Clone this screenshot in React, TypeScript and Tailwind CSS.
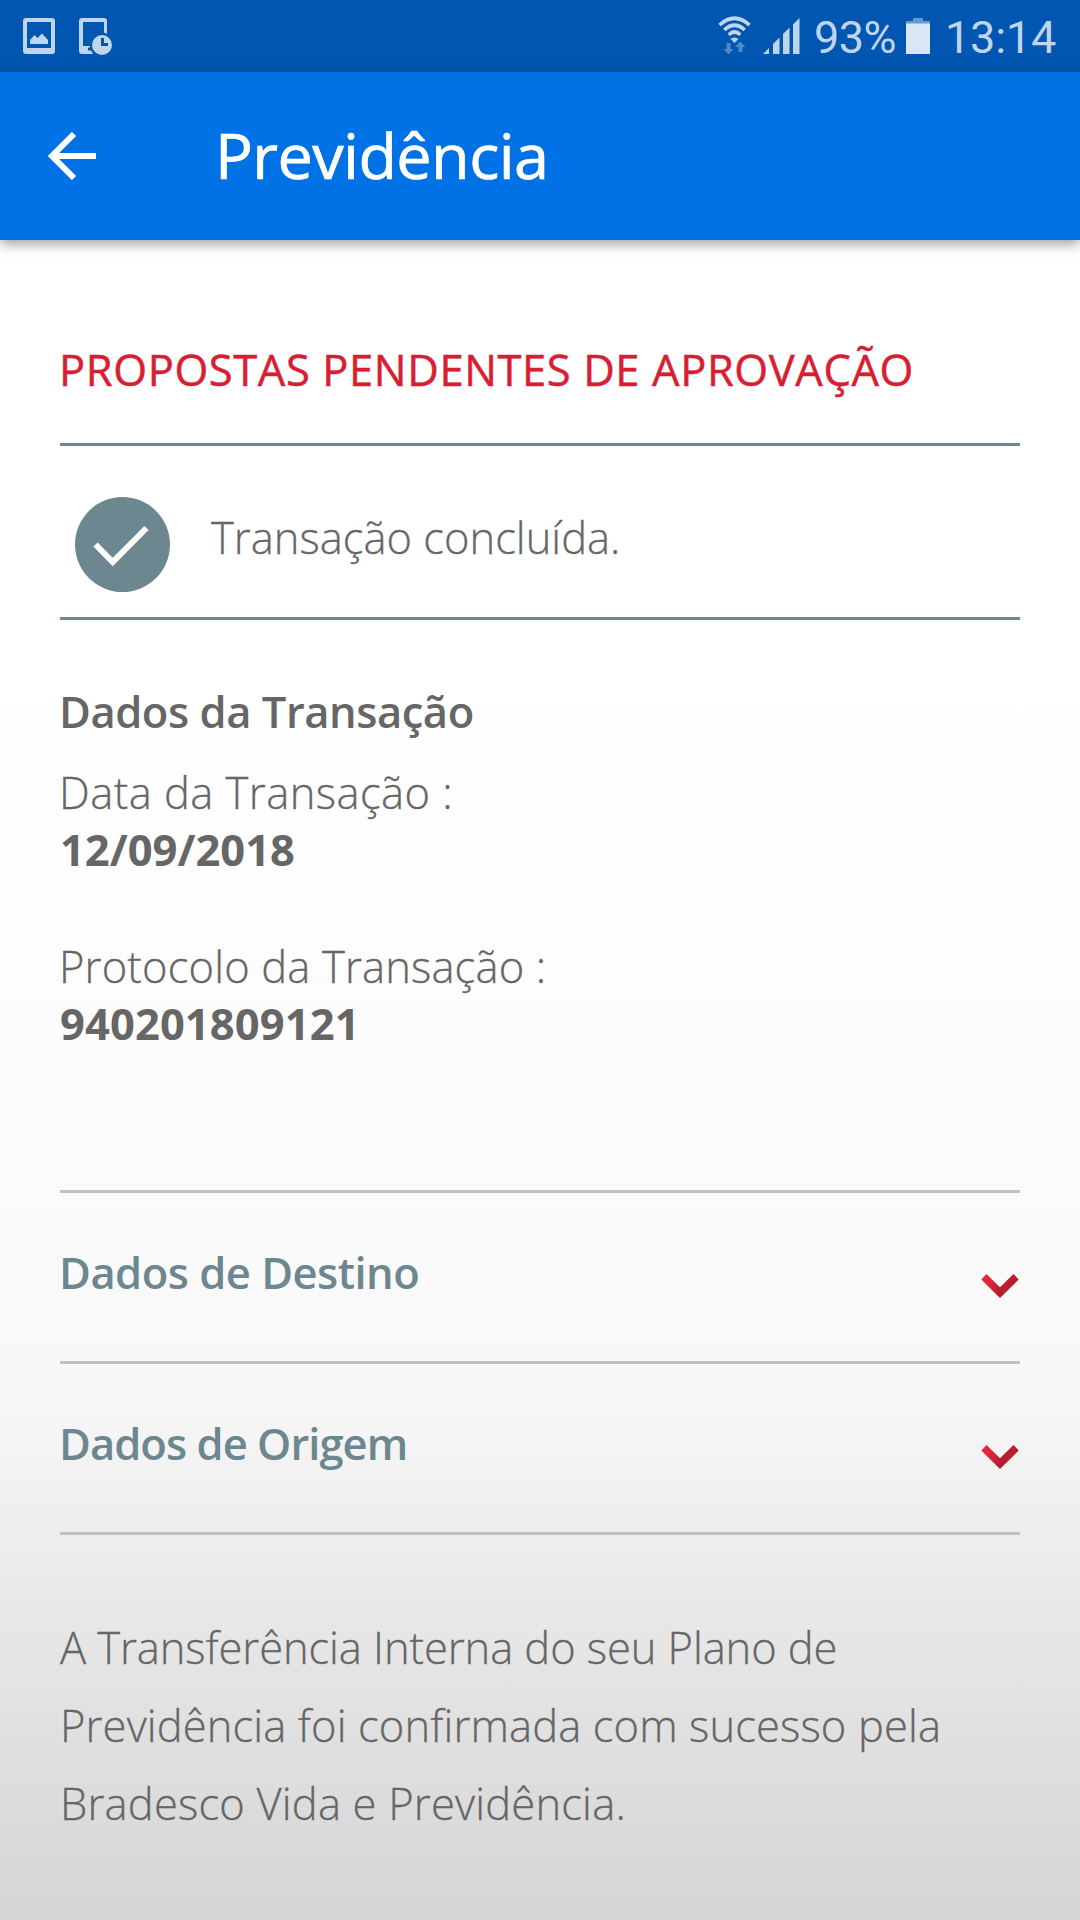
import type { ReactNode } from "react";

function StatusBar() {
  return (
    <div className="flex h-[72px] items-start bg-[#0056b0] text-[#bfd5ec]">
      <svg className="ml-[23px] mt-[18px] h-[36px] w-[32px] shrink-0" viewBox="0 0 32 36" fill="currentColor">
        <path fillRule="evenodd" d="M3 0H29Q32 0 32 3V33Q32 36 29 36H3Q0 36 0 33V3Q0 0 3 0ZM4 4V30H28V4Z" />
        <path d="M7 26V22L11.5 17L14.5 20L19 15.5L25 22V26Z" />
      </svg>
      <svg className="ml-[24px] mt-[18px] h-[38px] w-[34px] shrink-0" viewBox="0 0 34 38" fill="currentColor">
        <path d="M3 0H25Q28 0 28 3V16L25 14.5V4H4V28H11V29.5H9V32.5H12L14 36H3Q0 36 0 33V3Q0 0 3 0Z" />
        <path fillRule="evenodd" d="M23 17A10 10 0 1 1 23 37A10 10 0 1 1 23 17ZM22 20V28H29V25H25V20Z" />
      </svg>
      <svg className="ml-[605px] mt-[16px] h-[40px] w-[34px] shrink-0" viewBox="0 0 34 40">
        <g fill="none" stroke="currentColor" strokeWidth="3.6">
          <path d="M1.500 9Q16.500 -4.500 31.500 9" />
          <path d="M6.300 14Q16.500 4.500 26.700 14" />
          <path d="M10.700 18.700Q16.500 13.300 22.300 18.700" />
        </g>
        <path d="M12.500 23Q16.500 20 20.500 23L16.500 27Z" fill="currentColor" />
        <path d="M8.500 27H12.500V33H15.500L10.500 38.500L5.500 33H8.500Z" fill="#4d8aca" />
        <path d="M20.500 36V31H17L22 25.500L27.500 31H24.500V36Z" fill="#4d8aca" />
      </svg>
      <svg className="ml-[11px] mt-[18px] h-[36px] w-[37px] shrink-0" viewBox="0 0 37 36" fill="currentColor">
        <path d="M0 36L6 30V36ZM10 36V26L16.500 19.500V36ZM20 36V16L26.500 9.500V36ZM30 36V6.500L36.500 0V36Z" />
      </svg>
      <span className="ml-[14px] w-[85px] whitespace-nowrap font-[Roboto,sans-serif] text-[45px] leading-[76px] tracking-[-0.5px]">93%</span>
      <svg className="ml-[7px] mt-[18px] h-[36px] w-[24px] shrink-0" viewBox="0 0 24 36">
        <path d="M7 0H17V3H24V6H0V3H7Z" fill="#6699d0" />
        <path d="M0 5.500H24V36H0Z" fill="#d9e6f3" />
      </svg>
      <span className="ml-[15px] whitespace-nowrap font-[Roboto,sans-serif] text-[45px] leading-[76px] tracking-[-0.2px]">13:14</span>
    </div>
  );
}

function Header() {
  return (
    <header className="flex h-[168px] items-start bg-[#0072e6] shadow-[0_4px_12px_rgba(0,0,0,0.38)]">
      <svg className="ml-[48px] mt-[60px] h-[48px] w-[48px]" viewBox="0 0 48 48" fill="none" stroke="#fff" strokeWidth="6">
        <path d="M48 24H5M26 2L4 24L26 46" />
      </svg>
      <h1 className="ml-[119px] mt-[41px] whitespace-nowrap text-[63px] leading-[84px] tracking-[-0.6px] text-white [-webkit-text-stroke:0.7px_#fff]">Previdência</h1>
    </header>
  );
}

function Field({ label, children }: { label: ReactNode; children: ReactNode }) {
  return (
    <div className="leading-[57px]">
      <div className="-ml-px font-light [-webkit-text-stroke:0.3px_#666]">{label}</div>
      <div className="font-bold">{children}</div>
    </div>
  );
}

function Chevron({ id }: { id: string }) {
  return (
    <svg className="mr-[1.5px] mt-[81px] h-[24px] w-[38px]" viewBox="0 0 38 24">
      <defs>
        <linearGradient id={id} x1="0" y1="0" x2="1" y2="0.3">
          <stop offset="0.250" stopColor="#e6273b" />
          <stop offset="0.650" stopColor="#b81d30" />
        </linearGradient>
      </defs>
      <path d="M0.300 5.500L5.500 0L19 13.200L32.500 0L37.700 5.500L19 24Z" fill={`url(#${id})`} />
    </svg>
  );
}

function Row({ id, children }: { id: string; children: ReactNode }) {
  return (
    <div className="flex h-[171px] items-start justify-between border-b-[3px] border-[#c1c1c1]">
      <h2 className="-ml-px mt-[50px] font-semibold leading-[60px] text-[#6d8790]">{children}</h2>
      <Chevron id={id} />
    </div>
  );
}

export default function App() {
  return (
    <div className="flex h-[1920px] w-[1080px] flex-col overflow-hidden bg-[linear-gradient(to_bottom,#ffffff_600px,#fdfdfd_980px,#f8f8f8_1370px,#f5f5f5_1430px,#ededed_1535px,#e1e1e1_1720px,#d9d9d9_1850px,#d5d5d5_1920px)] font-['Open_Sans','Noto_Sans',sans-serif] text-[43.5px] text-[#666666]">
      <StatusBar />
      <Header />
      <main className="flex flex-col px-[60px] pt-[100px]">
        <h2 className="-ml-px whitespace-nowrap leading-[60px] tracking-[0.6px] text-[#d81e32] [-webkit-text-stroke:0.5px_#d81e32]">PROPOSTAS PENDENTES DE APROVAÇÃO</h2>
        <div className="mt-[43px] flex h-[177px] items-start border-y-[3px] border-[#6d8790]">
          <svg className="ml-[15px] mt-[51px] h-[95px] w-[95px]" viewBox="0 0 95 95">
            <circle cx="47.500" cy="47.500" r="47.500" fill="#6d8790" />
            <path d="M20.500 47.500L37.700 65L71.500 31" fill="none" stroke="#fff" strokeWidth="6" />
          </svg>
          <p className="ml-[41px] mt-[62px] whitespace-nowrap font-light leading-[60px] [-webkit-text-stroke:0.3px_#666]">Transação concluída.</p>
        </div>
        <h2 className="-ml-px mt-[62px] font-semibold leading-[60px] tracking-[-0.45px]">Dados da Transação</h2>
        <div className="mt-[22px] flex flex-col gap-[60px]">
          <Field label={<span className="tracking-[0.45px]">Data da Transação :</span>}>12/09/2018</Field>
          <Field label={<span className="tracking-[0.15px]">Protocolo da Transação :</span>}>
            <span className="tracking-[0.1px]">940201809121</span>
          </Field>
        </div>
        <section className="mt-[138px] border-t-[3px] border-[#c1c1c1]">
          <Row id="destino"><span className="tracking-[-0.5px]">Dados de Destino</span></Row>
          <Row id="origem"><span className="tracking-[-0.95px]">Dados de Origem</span></Row>
        </section>
        <p className="mt-[74px] whitespace-nowrap font-light leading-[78px] [-webkit-text-stroke:0.3px_#666]">
          <span className="tracking-[-0.09px]">A Transferência Interna do seu Plano de</span>
          <br />
          <span className="tracking-[0.12px]">Previdência foi confirmada com sucesso pela</span>
          <br />
          <span className="tracking-[0.19px]">Bradesco Vida e Previdência.</span>
        </p>
      </main>
    </div>
  );
}
